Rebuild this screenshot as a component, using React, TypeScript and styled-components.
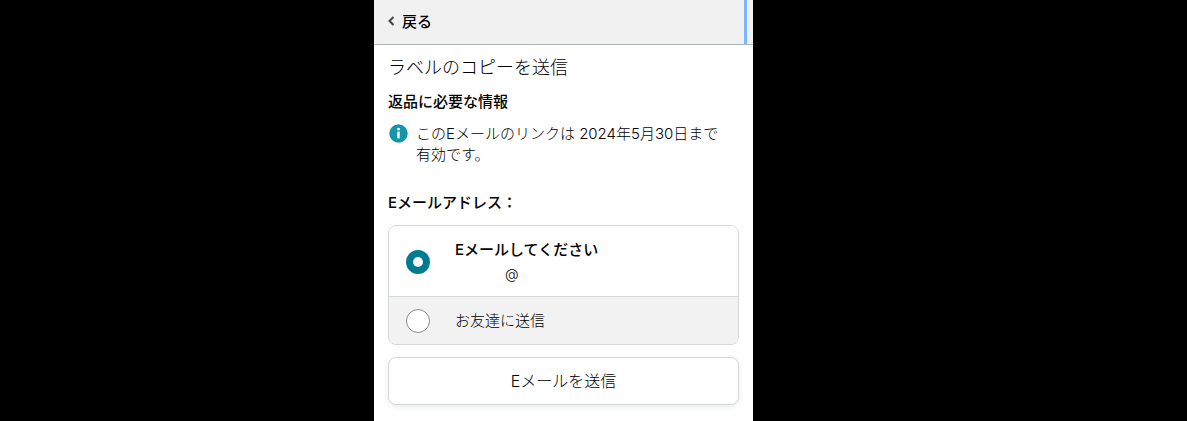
import React, { useState } from "react";
import styled, { createGlobalStyle } from "styled-components";

const GlobalStyle = createGlobalStyle`
  *, *::before, *::after { box-sizing: border-box; }
  body {
    margin: 0;
    background: #000;
    color: #000;
    font-family: Inter, "Noto Sans CJK JP", sans-serif;
    font-size: 15px;
    font-weight: 300;
    line-height: 21px;
  }
`;

const Page = styled.div`
  display: grid;
  grid-template-columns: 374fr 379fr 434fr;
  min-height: 100vh;
`;

const Sheet = styled.main`
  grid-column: 2;
  background: #fff;
`;

const TopBar = styled.header`
  display: flex;
  justify-content: space-between;
  height: 45px;
  padding: 0 6px 0 14px;
  background: #f1f1f1;
  border-bottom: 1px solid #adb3b3;
`;

const BackLink = styled.a`
  display: flex;
  align-items: center;
  gap: 7px;
  color: #000;
  font-weight: 500;
  text-decoration: none;
  padding-bottom: 2px;
`;

const Marker = styled.span`
  width: 3px;
  background: #7ab5ff;
`;

const Content = styled.div`
  display: flex;
  flex-direction: column;
  padding: 10px 14px 16px;
`;

const Title = styled.h1`
  margin: 0;
  font-size: 18px;
  font-weight: 300;
  line-height: 26px;
`;

const Heading = styled.h2`
  margin: 0;
  padding-top: 10px;
  font-size: 15px;
  font-weight: 500;
  line-height: 21px;
`;

const Notice = styled.div`
  display: flex;
  gap: 8px;
  padding: 11px 8px 17px 1px;

  svg { flex: none; margin-top: 1px; }
  p { margin: 0; }
`;

const Options = styled.fieldset`
  min-width: 0;
  margin: 12px 0;
  padding: 0;
  border: 1px solid #d5d9d9;
  border-radius: 8px;
  overflow: hidden;
`;

const Option = styled.label<{ $selected: boolean }>`
  display: flex;
  align-items: center;
  gap: 25px;
  padding: 12px 17px 11px;
  line-height: 24px;
  background: ${(p) => (p.$selected ? "#fff" : "#f2f2f2")};

  & + & { border-top: 1px solid #d5d9d9; }
`;

const Radio = styled.input`
  appearance: none;
  flex: none;
  width: 24px;
  height: 24px;
  margin: 0;
  border: 1px solid #888c8c;
  border-radius: 50%;
  background: #fff;

  &:checked { border: 7px solid #007b8f; }
`;

const OptionText = styled.span`
  display: flex;
  flex-direction: column;
`;

const OptionName = styled.span<{ $strong?: boolean }>`
  font-weight: ${(p) => (p.$strong ? 500 : 300)};
`;

const Address = styled.span`
  padding-left: 50px;
  font-size: 14px;
  line-height: 23px;
`;

const SendButton = styled.button`
  height: 48px;
  border: 1px solid #d5d9d9;
  border-radius: 8px;
  background: #fff;
  box-shadow: 0 2px 5px rgba(213, 217, 217, 0.5);
  color: #000;
  font: inherit;
  font-size: 16px;
`;

export default function App() {
  const [target, setTarget] = useState("self");

  return (
    <>
      <GlobalStyle />
      <Page>
        <Sheet lang="ja">
          <TopBar>
            <BackLink href="#back">
              <svg width="7" height="10" viewBox="0 0 7 10" fill="none" stroke="#444" strokeWidth="2" aria-hidden="true">
                <path d="M5.5 1 1.5 5l4 4" />
              </svg>
              戻る
            </BackLink>
            <Marker />
          </TopBar>
          <Content>
            <Title>ラベルのコピーを送信</Title>
            <Heading>返品に必要な情報</Heading>
            <Notice>
              <svg width="19" height="19" viewBox="0 0 19 19" aria-hidden="true">
                <circle cx="9.5" cy="9.5" r="9.2" fill="#1196ab" />
                <circle cx="9.5" cy="5.2" r="1.4" fill="#fff" />
                <path d="M8.3 7.6h2.4v6.8H8.3z" fill="#fff" />
              </svg>
              <p>このEメールのリンクは 2024年5月30日まで有効です。</p>
            </Notice>
            <Heading id="address-heading">Eメールアドレス：</Heading>
            <Options aria-labelledby="address-heading">
              <Option $selected={target === "self"}>
                <Radio type="radio" name="target" checked={target === "self"} onChange={() => setTarget("self")} />
                <OptionText>
                  <OptionName $strong>Eメールしてください</OptionName>
                  <Address>@</Address>
                </OptionText>
              </Option>
              <Option $selected={target === "friend"}>
                <Radio type="radio" name="target" checked={target === "friend"} onChange={() => setTarget("friend")} />
                <OptionName>お友達に送信</OptionName>
              </Option>
            </Options>
            <SendButton type="button">Eメールを送信</SendButton>
          </Content>
        </Sheet>
      </Page>
    </>
  );
}
